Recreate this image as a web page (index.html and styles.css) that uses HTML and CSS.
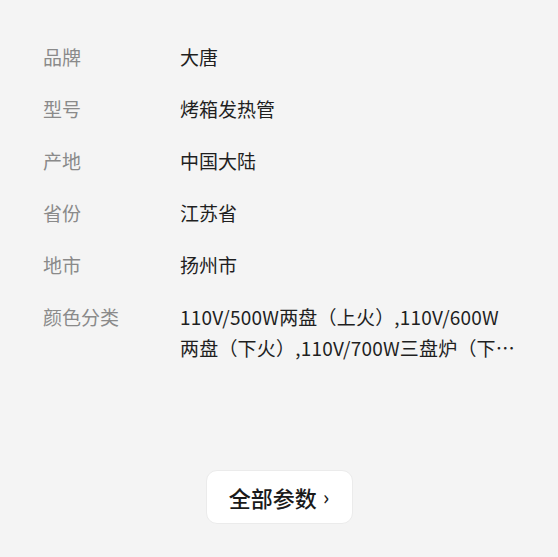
FILE: index.html
```html
<!DOCTYPE html>
<html lang="zh">
<head>
<meta charset="utf-8">
<link rel="stylesheet" href="styles.css">
</head>
<body>
<div class="page">
  <dl class="params">
    <div class="row"><dt>品牌</dt><dd>大唐</dd></div>
    <div class="row"><dt>型号</dt><dd>烤箱发热管</dd></div>
    <div class="row"><dt>产地</dt><dd>中国大陆</dd></div>
    <div class="row"><dt>省份</dt><dd>江苏省</dd></div>
    <div class="row"><dt>地市</dt><dd>扬州市</dd></div>
    <div class="row"><dt>颜色分类</dt><dd class="clamp">110V/500W两盘（上火）,110V/600W两盘（下火）,110V/700W三盘炉（下火）,110V/800W三盘炉（上火）</dd></div>
  </dl>
  <div class="more-wrap">
    <button class="more">全部参数<span class="chev">›</span></button>
  </div>
</div>
</body>
</html>
```
FILE: styles.css
```css
html, body {
  margin: 0;
  padding: 0;
  background: #f4f4f4;
}
body {
  font-family: "Noto Sans CJK SC", "Noto Sans", sans-serif;
  font-size: 19px;
  color: #1f1f1f;
}
.page {
  padding: 41px 0 0 43px;
}
.params {
  margin: 0;
  display: flex;
  flex-direction: column;
  gap: 21px;
}
.row {
  display: flex;
  line-height: 31px;
}
dt {
  width: 137px;
  flex: none;
  color: #8a8a8a;
}
dd {
  margin: 0;
  width: 336px;
}
.clamp {
  display: -webkit-box;
  -webkit-box-orient: vertical;
  -webkit-line-clamp: 2;
  overflow: hidden;
  word-break: break-all;
  letter-spacing: 0.2px;
}
.more-wrap {
  display: flex;
  justify-content: center;
  margin-top: 107px;
  margin-left: -43px;
}
.more {
  width: 147px;
  height: 54px;
  background: #fff;
  border: 1px solid #ebebeb;
  border-radius: 11px;
  font-family: "Noto Sans CJK SC", sans-serif;
  font-size: 22px;
  font-weight: 500;
  color: #1a1a1a;
  display: flex;
  align-items: center;
  justify-content: center;
  padding: 0;
  margin-left: 0;
}
.chev {
  font-size: 20px;
  margin-left: 6px;
  position: relative;
  top: -1px;
}
```
